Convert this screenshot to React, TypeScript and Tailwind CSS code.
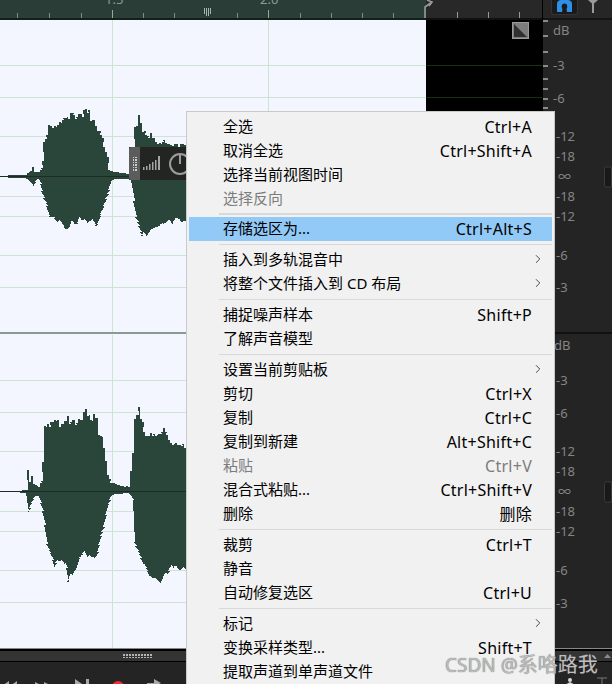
import { ChevronRight } from "lucide-react";

const wave1 =
  "0,176 12,175 25,175 28,172 30,171 32,167 34,172 38,172 41,168 42,160 43,140 46,134 48,127 50,126 52,125 55,127 57,124 60,125 63,118 66,116 68,118 70,115 73,117 76,114 78,117 80,114 85,112 88,113 90,118 93,122 97,131 100,135 103,145 107,158 108,170 113,172 120,173 128,174 131,176 133,150 134,128 136,125 138,118 140,124 142,130 145,136 148,137 150,133 153,140 157,144 160,142 165,141 170,145 186,146 186,224 175,220 170,222 165,222 155,228 150,232 148,232 145,240 143,232 141,237 138,228 135,220 133,200 131,180 128,179 113,179 110,180 108,190 105,200 100,212 97,222 95,224 92,220 88,222 85,220 80,221 78,218 75,224 73,225 70,222 67,230 63,226 60,222 55,222 52,218 50,220 48,216 46,208 43,200 41,190 38,178 35,180 32,185 30,182 25,178 12,178 0,177";

const wave2 =
  "0,491 14,491 26,490 27,469 29,482 31,476 33,484 38,487 41,480 42,460 44,430 45,428 47,424 50,422 52,419 55,421 57,419 59,425 62,424 65,423 67,420 70,424 73,422 76,420 78,422 81,417 85,412 88,418 91,417 93,416 96,420 98,432 103,445 105,460 107,475 110,483 115,484 120,486 128,487 132,455 134,420 137,416 138,410 140,420 143,430 146,438 148,434 150,432 153,437 158,433 163,430 166,437 170,443 175,445 186,445 186,570 178,567 170,567 163,575 159,585 155,580 150,577 145,570 143,562 140,560 135,550 133,540 133,500 128,493 115,494 110,495 107,505 103,525 98,545 95,555 92,555 87,555 82,550 78,560 74,572 70,572 67,578 66,568 63,560 58,565 56,560 53,563 50,555 46,545 44,525 42,510 38,495 33,497 30,502 27,512 26,493 14,492 0,492";

// roughen the hand-traced outline so the edges look like audio peaks
const jag = (points: string, center: number) => {
  const pts = points.split(" ").map((p) => p.split(",").map(Number));
  const out: string[] = [];
  pts.forEach(([x, y], i) => {
    const next = pts[i + 1];
    if (!next) {
      out.push(`${x},${y}`);
      return;
    }
    const steps = Math.max(1, Math.round(Math.abs(next[0] - x) / 2));
    for (let s = 0; s < steps; s++) {
      const px = Math.round(x + ((next[0] - x) * s) / steps);
      const py = y + ((next[1] - y) * s) / steps;
      const amp = Math.min(4, Math.abs(py - center) * 0.07);
      const n = Math.sin(px * 12.9898 + i) * 43758.5453;
      const ny = Math.round(py + (n - Math.floor(n) - 0.5) * 2 * amp);
      out.push(`${px},${ny}`, `${px + 2},${ny}`);
    }
  });
  return out.join(" ");
};

const lines1 = [65, 97, 136, 196, 216, 255, 287];
const lines2 = [380, 412, 451, 511, 531, 570, 602];
const rulerTicks = [17, 49, 81, 143, 174, 237, 300, 331, 362, 393];

const scale1 = [
  { t: "dB", y: 30, x: 10 },
  { t: "-3", y: 65, x: 10 },
  { t: "-6", y: 98, x: 10 },
  { t: "-12", y: 136, x: 13 },
  { t: "-18", y: 156, x: 13 },
  { t: "∞", y: 176, x: 15 },
  { t: "-18", y: 196, x: 13 },
  { t: "-12", y: 216, x: 13 },
  { t: "-6", y: 255, x: 13 },
  { t: "-3", y: 287, x: 13 },
];

const scale2 = [
  { t: "dB", y: 345, x: 11 },
  { t: "-3", y: 380, x: 13 },
  { t: "-6", y: 413, x: 13 },
  { t: "-12", y: 451, x: 13 },
  { t: "-18", y: 471, x: 13 },
  { t: "∞", y: 491, x: 15 },
  { t: "-18", y: 511, x: 13 },
  { t: "-12", y: 531, x: 13 },
  { t: "-6", y: 570, x: 13 },
  { t: "-3", y: 603, x: 13 },
];

type Row =
  | { sep: number }
  | { label: string; keys?: string; sub?: boolean; off?: boolean; on?: boolean };

const menu: Row[] = [
  { label: "全选", keys: "Ctrl+A" },
  { label: "取消全选", keys: "Ctrl+Shift+A" },
  { label: "选择当前视图时间" },
  { label: "选择反向", off: true },
  { sep: 6 },
  { label: "存储选区为...", keys: "Ctrl+Alt+S", on: true },
  { sep: 7 },
  { label: "插入到多轨混音中", sub: true },
  { label: "将整个文件插入到 CD 布局", sub: true },
  { sep: 7 },
  { label: "捕捉噪声样本", keys: "Shift+P" },
  { label: "了解声音模型" },
  { sep: 7 },
  { label: "设置当前剪贴板", sub: true },
  { label: "剪切", keys: "Ctrl+X" },
  { label: "复制", keys: "Ctrl+C" },
  { label: "复制到新建", keys: "Alt+Shift+C" },
  { label: "粘贴", keys: "Ctrl+V", off: true },
  { label: "混合式粘贴...", keys: "Ctrl+Shift+V" },
  { label: "删除", keys: "删除" },
  { sep: 7 },
  { label: "裁剪", keys: "Ctrl+T" },
  { label: "静音" },
  { label: "自动修复选区", keys: "Ctrl+U" },
  { sep: 7 },
  { label: "标记", sub: true },
  { label: "变换采样类型...", keys: "Shift+T" },
  { label: "提取声道到单声道文件" },
];

const Track = ({
  top,
  height,
  lines,
  wave,
  center,
  scale,
}: {
  top: number;
  height: number;
  lines: number[];
  wave: string;
  center: number;
  scale: { t: string; y: number; x: number }[];
}) => (
  <div className="flex shrink-0" style={{ height }}>
    <svg className="w-[426px] shrink-0 bg-[#f4f6ff]" viewBox={`0 ${top} 426 ${height}`} height={height}>
      {lines.map((y) => (
        <rect key={y} x="0" y={y} width="426" height="1" fill="#cfe3d4" />
      ))}
      <rect x="112" y={top} width="1" height={height} fill="#cfe3d4" />
      <rect x="268" y={top} width="1" height={height} fill="#cfe3d4" />
      <polygon points={jag(wave, center)} fill="#2a4539" shapeRendering="crispEdges" />
      <rect x="0" y={center} width="186" height="1" fill="#1d2b25" />
    </svg>
    <svg className="w-[116px] shrink-0 bg-black" viewBox={`426 ${top} 116 ${height}`} height={height}>
      {lines.map((y) => (
        <rect key={y} x="426" y={y} width="116" height="1" fill="#123312" />
      ))}
    </svg>
    <div className="w-px bg-black" />
    <div className="relative flex-1 bg-[#242424]">
      {scale.map((s) => (
        <span
          key={s.y}
          className="absolute -translate-y-1/2 text-[13px] leading-none text-[#858585]"
          style={{ left: s.x, top: s.y - top }}
        >
          {s.t}
        </span>
      ))}
      <div
        className="absolute left-[61px] h-[21px] w-2 -translate-y-1/2 rounded-l-[2px] border border-[#3a3a3a] bg-[#191919]"
        style={{ top: center - top + 1 }}
      />
    </div>
  </div>
);

export default function App() {
  return (
    <div className="relative w-[612px] h-[684px] overflow-hidden bg-[#242424] font-['Noto_Sans','Noto_Sans_CJK_SC',sans-serif]">
      {/* top ruler */}
      <div className="flex h-5 shrink-0">
        <div className="relative w-[426px] bg-[#2a3e37] border-b-2 border-[#10201a]">
          {rulerTicks.map((x) => (
            <span key={x} className="absolute bottom-0 h-[5px] w-px bg-[#7f8f88]" style={{ left: x }} />
          ))}
          <span className="absolute bottom-0 left-[112px] h-[8px] w-px bg-[#9aa8a2]" />
          <span className="absolute bottom-0 left-[268px] h-[8px] w-px bg-[#9aa8a2]" />
          <span className="absolute left-[105px] top-[-9px] text-[13px] leading-[16px] text-[#8d9b95]">1.5</span>
          <span className="absolute left-[260px] top-[-9px] text-[13px] leading-[16px] text-[#8d9b95]">2.0</span>
          <div className="absolute left-[204px] top-[8px] flex gap-px">
            <span className="h-[6px] w-px bg-[#a9b5b0]" />
            <span className="h-[8px] w-px bg-[#a9b5b0]" />
            <span className="h-[8px] w-px bg-[#a9b5b0]" />
            <span className="h-[6px] w-px bg-[#a9b5b0]" />
          </div>
        </div>
        <div className="relative w-[116px] bg-[#282828] border-b-2 border-[#111]">
          <svg className="absolute left-[-3px] top-0" width="14" height="18" viewBox="0 0 14 18" fill="none" stroke="#9a9a9a" strokeWidth="1.6">
            <path d="M2 18 V7 L9 2 M4 0 L9 2 L6 6" />
          </svg>
          <span className="absolute bottom-0 left-[31px] h-[6px] w-px bg-[#999]" />
          <span className="absolute bottom-0 left-[62px] h-[6px] w-px bg-[#999]" />
          <span className="absolute bottom-0 left-[93px] h-[6px] w-px bg-[#999]" />
        </div>
        <div className="w-px bg-black" />
        <div className="flex flex-1 items-start gap-[9px] bg-[#262626] border-b-2 border-[#141414] pl-[8px]">
          <div className="flex h-[15px] w-[27px] items-start justify-center rounded-b-[3px] border border-t-0 border-[#333] bg-[#1a1a1a]">
            <svg width="17" height="12" viewBox="0 0 17 12">
              <path d="M1 12 V4 C1 1 3 0 5 0 H12 C14 0 16 1 16 4 V12 H11 L10.5 9 C12 7 11.5 3.5 8.5 3.5 C5.5 3.5 5 7 6.5 9 L6 12 Z" fill="#2f8fe8" />
            </svg>
          </div>
          <svg width="12" height="13" viewBox="0 0 12 13" fill="#9a9a9a">
            <path d="M1 0 H11 L7 3.5 V13 H5 V3.5 Z" />
          </svg>
        </div>
      </div>

      <Track top={20} height={312} lines={lines1} wave={wave1} center={176} scale={scale1} />
      <div className="flex h-[3px]">
        <div className="w-[426px] border-t-2 border-[#8b9a92] bg-[#f4f6ff]" />
        <div className="flex-1 border-t-2 border-[#111]" />
      </div>
      <Track top={335} height={313} lines={lines2} wave={wave2} center={491} scale={scale2} />

      {/* bottom bars */}
      <div className="h-[3px] border-t border-[#888] bg-black" />
      <div className="flex h-[10px] items-center justify-between bg-[#343434] pl-[123px] pr-[1px]">
        <div className="grid grid-cols-[repeat(10,2px)] gap-px">
          {Array.from({ length: 20 }, (_, i) => (
            <span key={i} className="size-[1.5px] bg-[#b5b5b5]" />
          ))}
        </div>
        <svg width="7" height="4" viewBox="0 0 7 4" fill="#8a8a8a"><path d="M3.5 0 L7 4 H0 Z" /></svg>
      </div>
      <div className="h-px bg-black" />
      <div className="flex h-[24px] justify-between bg-[#242424]">
        <svg width="186" height="24" viewBox="0 660 186 24" fill="#a8a8a8">
          <path d="M17 679 L10 684 H17 Z M9 679 L2 684 H9 Z" />
          <path d="M35 680 L43 684 H35 Z M44 680 L52 684 H44 Z" />
          <path d="M75 677 L85 684 H75 Z M86 677 H89 V684 H86 Z" />
          <circle cx="118" cy="685" r="6" fill="#ee2f32" />
          <path d="M147 684 V681 H154 V677 L161 681 L155 684 Z" />
        </svg>
        <svg width="50" height="24" viewBox="0 0 50 24" fill="#d8d8d8">
          <circle cx="8" cy="18" r="2" />
          <path d="M1 24 L8 20 L15 24 Z" />
          <path d="M35 16 H45 M40 16 V24" stroke="#777" fill="none" />
        </svg>
      </div>

      {/* details resting on the panels */}
      <svg className="absolute left-[512px] top-[22px]" width="17" height="17" viewBox="0 0 17 17">
        <rect x="0.5" y="0.5" width="16" height="16" fill="#7d7d7d" stroke="#9a9a9a" />
        <path d="M2 2 L15 15 H2 Z" fill="#303030" />
      </svg>

      <div className="absolute left-[543px] top-0 flex h-[120px] w-[5px] flex-col">
        {[20, 35, 51, 65, 78, 88, 98, 107].map((y) => (
          <span key={y} className="absolute left-0 h-[2px] w-[5px] bg-[#8a8a8a]" style={{ top: y }} />
        ))}
      </div>

      {/* floating level control */}
      <div className="absolute left-[129px] top-[147px] flex h-[33px] w-[60px] bg-[#232523]">
        <div className="flex w-[11px] items-center justify-center rounded-l-[2px] bg-[#5c5c5c]">
          <div className="grid grid-cols-2 gap-px">
            {Array.from({ length: 12 }, (_, i) => (
              <span key={i} className="size-[1.5px] bg-[#cfcfcf]" />
            ))}
          </div>
        </div>
        <svg width="49" height="33" viewBox="0 0 49 33" fill="none">
          <g fill="#a5a5a5">
            <rect x="3" y="20" width="1.5" height="3" />
            <rect x="6" y="19" width="1.5" height="4" />
            <rect x="9" y="17" width="1.5" height="6" />
            <rect x="12" y="15" width="1.5" height="8" />
            <rect x="15" y="13" width="1.5" height="10" />
            <rect x="18" y="9" width="2" height="14" />
          </g>
          <circle cx="40" cy="17" r="10" stroke="#9d9d9d" strokeWidth="2" />
          <path d="M40 7 V17" stroke="#9d9d9d" strokeWidth="2" />
        </svg>
      </div>

      {/* context menu */}
      <div className="absolute left-[186px] top-[111px] h-[580px] w-[369px] border border-[#c9c9c9] bg-[#f1f1f1] px-[2px] pt-[3px] text-[15px] text-black">
        {menu.map((row, i) =>
          "sep" in row ? (
            <div key={i} className="flex items-center pl-[30px]" style={{ height: row.sep }}>
              <div className="h-[1.5px] flex-1 bg-[#d9d9d9]" />
            </div>
          ) : (
            <div
              key={i}
              className={`relative flex h-6 items-center justify-between pb-[1px] pl-[34px] pr-[20px] leading-none ${row.on ? "bg-[#91c9f7]" : ""} ${row.off ? "text-[#7c7c7c]" : ""}`}
            >
              <span>{row.label}</span>
              {row.keys && <span className="text-[16px] tracking-[0.25px]">{row.keys}</span>}
              {row.sub && <ChevronRight className="absolute right-[7px] top-[4px] text-[#333]" size={14} strokeWidth={1.5} />}
            </div>
          ),
        )}
      </div>

      {/* watermark */}
      <span className="absolute left-[445px] top-[652px] text-[19px] leading-[26px] text-[#bdbdbd] [text-shadow:0_0_1px_#555]">
        CSDN @<span className="text-[20px]">系咯路我</span>
      </span>
    </div>
  );
}
